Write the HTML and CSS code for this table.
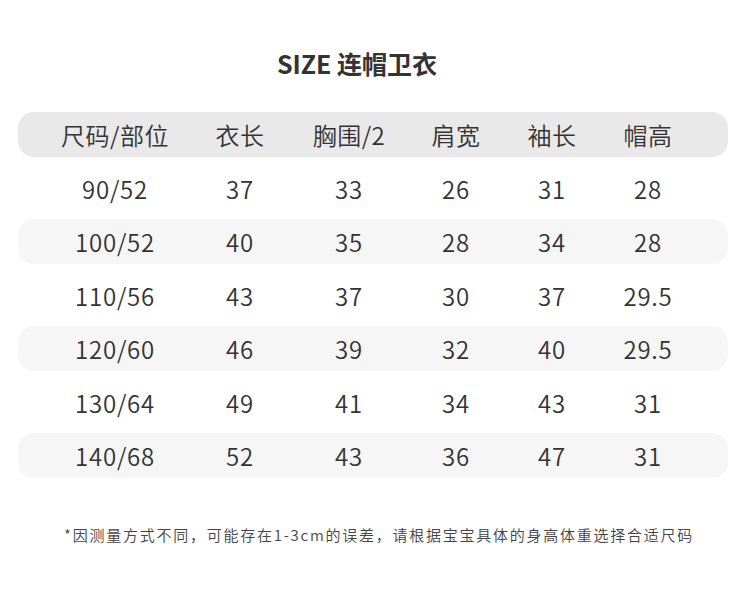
FILE: index.html
```html
<!DOCTYPE html>
<html lang="zh-CN">
<head>
<meta charset="utf-8">
<link rel="stylesheet" href="styles.css">
</head>
<body>
<div class="page">
  <h1 class="title">SIZE 连帽卫衣</h1>
  <div class="table">
    <div class="row head">
      <div class="cell">尺码/部位</div><div class="cell">衣长</div><div class="cell">胸围/2</div><div class="cell">肩宽</div><div class="cell">袖长</div><div class="cell">帽高</div>
    </div>
    <div class="row">
      <div class="cell">90/52</div><div class="cell">37</div><div class="cell">33</div><div class="cell">26</div><div class="cell">31</div><div class="cell">28</div>
    </div>
    <div class="row alt">
      <div class="cell">100/52</div><div class="cell">40</div><div class="cell">35</div><div class="cell">28</div><div class="cell">34</div><div class="cell">28</div>
    </div>
    <div class="row">
      <div class="cell">110/56</div><div class="cell">43</div><div class="cell">37</div><div class="cell">30</div><div class="cell">37</div><div class="cell">29.5</div>
    </div>
    <div class="row alt">
      <div class="cell">120/60</div><div class="cell">46</div><div class="cell">39</div><div class="cell">32</div><div class="cell">40</div><div class="cell">29.5</div>
    </div>
    <div class="row">
      <div class="cell">130/64</div><div class="cell">49</div><div class="cell">41</div><div class="cell">34</div><div class="cell">43</div><div class="cell">31</div>
    </div>
    <div class="row alt">
      <div class="cell">140/68</div><div class="cell">52</div><div class="cell">43</div><div class="cell">36</div><div class="cell">47</div><div class="cell">31</div>
    </div>
  </div>
  <p class="note">*因测量方式不同，可能存在1-3cm的误差，请根据宝宝具体的身高体重选择合适尺码</p>
</div>
</body>
</html>
```

FILE: styles.css
```css
html, body {
  margin: 0;
  padding: 0;
  background: #ffffff;
}
body {
  font-family: "Noto Sans CJK SC", "Noto Sans", sans-serif;
  color: #333333;
  width: 750px;
  height: 594px;
  overflow: hidden;
}
.page {
  padding: 42px 22px 0 18px;
}
.title {
  margin: 0;
  height: 42px;
  line-height: 42px;
  text-align: center;
  font-size: 25px;
  font-weight: 700;
  color: #333333;
  padding-right: 32px;
}
.table {
  margin-top: 28px;
  display: flex;
  flex-direction: column;
  gap: 8.5px;
}
.row {
  height: 45px;
  border-radius: 16px;
  display: grid;
  grid-template-columns: 194px 56px 162px 52px 140px 52px 54px;
  align-items: center;
}
.row.head {
  background: #e9e9e9;
}
.row.alt {
  background: #f6f6f6;
}
.cell {
  display: flex;
  justify-content: center;
  white-space: nowrap;
  font-size: 24px;
  font-weight: 350;
  letter-spacing: 0.8px;
  line-height: 45px;
  color: #333333;
}
.row.head .cell {
  letter-spacing: 0.5px;
}
.note {
  margin: 47px 0 0 0;
  text-align: center;
  font-size: 15px;
  font-weight: 350;
  letter-spacing: 1.75px;
  color: #444444;
  line-height: 20px;
  padding-left: 12px;
}
```
